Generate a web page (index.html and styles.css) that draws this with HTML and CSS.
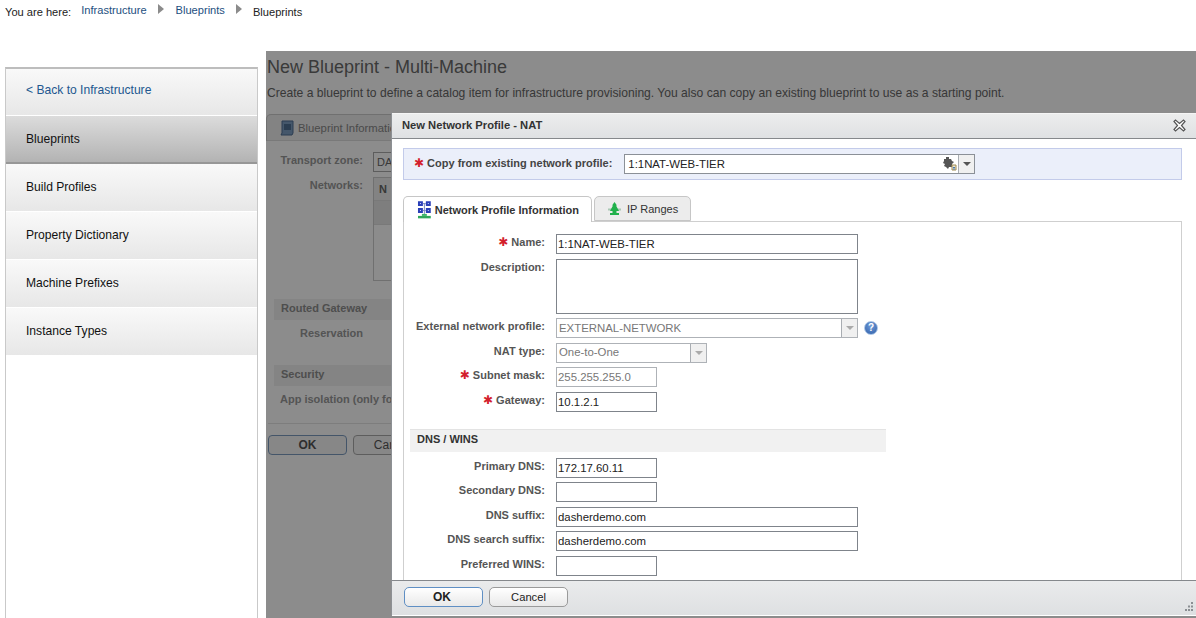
FILE: index.html
```html
<!DOCTYPE html>
<html lang="en">
<head>
  <meta charset="UTF-8">
  <title>New Blueprint - Multi-Machine</title>
  <link rel="stylesheet" href="styles.css">
</head>
<body>
  <div class="crumbs">
    <span class="crumb-label">You are here:</span>
    <a class="crumb-link">Infrastructure</a>
    <span class="crumb-arrow"></span>
    <a class="crumb-link">Blueprints</a>
    <span class="crumb-arrow"></span>
    <span class="crumb-current">Blueprints</span>
  </div>

  <div class="page">
    <nav class="sidebar">
      <a class="side-item side-back">&lt; Back to Infrastructure</a>
      <a class="side-item side-active">Blueprints</a>
      <a class="side-item">Build Profiles</a>
      <a class="side-item">Property Dictionary</a>
      <a class="side-item">Machine Prefixes</a>
      <a class="side-item">Instance Types</a>
    </nav>

    <main class="content">
      <h1 class="page-title">New Blueprint - Multi-Machine</h1>
      <p class="page-desc">Create a blueprint to define a catalog item for infrastructure provisioning. You also can copy an existing blueprint to use as a starting point.</p>

      <div class="back-tabs">
        <div class="back-tab">
          <svg class="back-tab-icon" width="16" height="16" viewBox="0 0 16 16"><path d="M3 1h11v12l-1 2H2l1-2z" fill="#7f9fc4" stroke="#4f6f94"/><path d="M5 4h7v6H5z" fill="#4f6f94"/></svg>
          Blueprint Information
        </div>
      </div>
      <div class="back-panel">
        <div class="back-row"><span class="back-label">Transport zone:</span><span class="back-input">DA</span></div>
        <div class="back-row back-row-tall">
          <span class="back-label">Networks:</span>
          <div class="back-table">
            <div class="back-table-head">N</div>
            <div class="back-table-row"></div>
          </div>
        </div>
        <div class="back-head">Routed Gateway</div>
        <div class="back-row back-row-res"><span class="back-label">Reservation</span></div>
        <div class="back-head">Security</div>
        <div class="back-isolation">App isolation (only for</div>
      </div>
      <div class="back-buttons">
        <span class="back-btn back-btn-ok">OK</span>
        <span class="back-btn">Cancel</span>
      </div>
    </main>
  </div>

  <div class="mask"></div>

  <section class="dialog">
    <header class="dialog-title">
      <span>New Network Profile - NAT</span>
      <svg class="dialog-close" width="13" height="13" viewBox="0 0 13 13"><path d="M1 2.500 2.500 1 6.500 4.500 10.500 1 12 2.500 8.500 6.500 12 10.500 10.500 12 6.500 8.500 2.500 12 1 10.500 4.500 6.500z" fill="#fff" stroke="#555" stroke-width="1.200"/></svg>
    </header>

    <div class="dialog-body">
      <div class="copy-bar">
        <span class="copy-label"><i class="req">✱</i> Copy from existing network profile:</span>
        <div class="combo copy-combo">
          <span class="combo-text">1:1NAT-WEB-TIER</span>
          <svg class="combo-puzzle" width="16" height="16" viewBox="0 0 16 16"><path d="M2 3h2V1h3v2h2l1 2 2 1-2 2v3H7l-1 2-2-2-2-1 1-2-2-1 1-2z" fill="#555"/><path d="M10 9h4v5h-4z" fill="#e8e4d0" stroke="#a08a50"/><path d="M11 11.500h2M11 13h2" stroke="#4a7ab0"/></svg>
          <span class="combo-btn"><span class="caret"></span></span>
        </div>
      </div>

      <div class="tabs">
        <div class="tab tab-active">
          <svg width="15" height="19" viewBox="0 0 15 19"><path d="M1 1h5v5H1zM9 1h5v5H9zM1 8h5v5H1zM9 8h5v5H9z" fill="#2a3fb8"/><path d="M3 3h1v1H3zM11 3h1v1h-1zM3 10h1v1H3zM11 10h1v1h-1z" fill="#cfd6ff"/><path d="M6 3.500h3M6 10.500h3M7.500 3v11" stroke="#7a8ac0"/><path d="M5 14h5v2H5z" fill="#3cb56a"/><path d="M1 16h13v2.500H1z" fill="#2fa85c"/></svg>
          Network Profile Information
        </div>
        <div class="tab">
          <svg width="15" height="14" viewBox="0 0 15 14"><path d="M1 7.500h13" stroke="#a9c9b4" stroke-width="2"/><path d="M7.500 0 10 3.500H9L12 9H9.500v2H12v2H3v-2h2.500V9H3l3-5.500H5z" fill="#22b14c"/></svg>
          IP Ranges
        </div>
      </div>

      <div class="tab-panel">
        <div class="form">
          <label class="form-label"><i class="req">✱</i> Name:</label>
          <div class="field field-long">1:1NAT-WEB-TIER</div>

          <label class="form-label">Description:</label>
          <div class="field field-long field-area"></div>

          <label class="form-label">External network profile:</label>
          <div class="field-line">
            <div class="combo combo-off field-long"><span class="combo-text">EXTERNAL-NETWORK</span><span class="combo-btn"><span class="caret"></span></span></div>
            <span class="help">?</span>
          </div>

          <label class="form-label">NAT type:</label>
          <div class="combo combo-off field-mid"><span class="combo-text">One-to-One</span><span class="combo-btn"><span class="caret"></span></span></div>

          <label class="form-label"><i class="req">✱</i> Subnet mask:</label>
          <div class="field field-short field-off">255.255.255.0</div>

          <label class="form-label"><i class="req">✱</i> Gateway:</label>
          <div class="field field-short">10.1.2.1</div>
        </div>

        <div class="section-head">DNS / WINS</div>

        <div class="form">
          <label class="form-label">Primary DNS:</label>
          <div class="field field-short">172.17.60.11</div>

          <label class="form-label">Secondary DNS:</label>
          <div class="field field-short"></div>

          <label class="form-label">DNS suffix:</label>
          <div class="field field-long">dasherdemo.com</div>

          <label class="form-label">DNS search suffix:</label>
          <div class="field field-long">dasherdemo.com</div>

          <label class="form-label">Preferred WINS:</label>
          <div class="field field-short"></div>
        </div>
      </div>
    </div>

    <footer class="dialog-foot">
      <button class="btn btn-ok">OK</button>
      <button class="btn">Cancel</button>
      <svg class="grip" width="10" height="10" viewBox="0 0 10 10"><path d="M7 0h2v2H7zM4 3.500h2v2H4zM7 3.500h2v2H7zM1 7h2v2H1zM4 7h2v2H4zM7 7h2v2H7z" fill="#8b8f93"/></svg>
    </footer>
  </section>
</body>
</html>
```

FILE: styles.css
```css
* {
  box-sizing: border-box;
}

html, body {
  height: 618px;
  overflow: hidden;
}

body {
  margin: 0;
  font-family: "Liberation Sans", Arial, sans-serif;
  font-size: 11px;
  color: #222;
  background: #fff;
  position: relative;
}

/* breadcrumb */
.crumbs {
  height: 51px;
  padding: 2px 0 0 5px;
  display: flex;
  align-items: flex-start;
  font-size: 11.100px;
  line-height: 16px;
}

.crumb-label {
  margin-top: 2px;
  margin-right: 10px;
}

.crumb-link {
  color: #1d4f80;
}

.crumb-arrow {
  width: 0;
  height: 0;
  margin: 2px 12px 0 11px;
  border-left: 6px solid #8b8b8b;
  border-top: 5px solid transparent;
  border-bottom: 5px solid transparent;
}

.crumb-current {
  margin: 2px 0 0 -1px;
}

/* page */
.page {
  display: flex;
  height: 567px;
}

.sidebar {
  width: 253px;
  margin: 16px 8px 0 5px;
  border: 1px solid #c9c9c9;
  border-top: 2px solid #bdbdbd;
  border-bottom: 0;
  display: flex;
  flex-direction: column;
}

.side-item {
  height: 48px;
  padding: 0 0 2px 20px;
  display: flex;
  align-items: center;
  font-size: 12.100px;
  color: #111;
  background: linear-gradient(#f9f9f9, #e7e7e7);
  border-bottom: 1px solid #fff;
}

.side-back {
  color: #22578f;
  height: 47px;
  padding-bottom: 4px;
}

.side-active {
  padding-bottom: 0;
  background: linear-gradient(#dcdcdc, #b3b3b3);
  border-bottom: 2px solid #979797;
}

.content {
  flex: 1;
  min-width: 0;
  padding-top: 4px;
  color: #9a9a9a;
}

.page-title {
  margin: 0;
  padding-left: 1px;
  font-size: 18px;
  font-weight: normal;
  line-height: 24px;
  color: #6a6a6a;
}

.page-desc {
  margin: 6px 0 0;
  padding-left: 1px;
  font-size: 12.100px;
  line-height: 16px;
  color: #666;
}

.back-tabs {
  display: flex;
  margin: 13px 0 0;
}

.back-tab {
  width: 222px;
  height: 27px;
  padding-left: 12px;
  display: flex;
  align-items: center;
  gap: 3px;
  font-size: 11.300px;
  color: #888;
  background: #eee;
  border: 1px solid #ccc;
  border-bottom-color: #ddd;
  border-radius: 5px 5px 0 0;
}

.back-panel {
  margin-left: 2px;
  padding-top: 11px;
}

.back-row {
  display: flex;
  align-items: flex-start;
  height: 25px;
}

.back-row-tall {
  height: 122px;
}

.back-row-res {
  height: 43px;
  padding-top: 3px;
}

.back-label {
  width: 95px;
  padding-top: 2px;
  text-align: right;
  font-weight: bold;
  color: #999;
  white-space: nowrap;
}

.back-input {
  margin-left: 10px;
  width: 60px;
  height: 20px;
  padding: 3px;
  color: #666;
  border: 1px solid #aaa;
}

.back-table {
  margin-left: 10px;
  width: 60px;
  height: 104px;
  border: 1px solid #ccc;
  font-weight: bold;
  color: #666;
}

.back-table-head {
  height: 23px;
  padding: 5px;
  background: #eee;
  border-bottom: 1px solid #ddd;
}

.back-table-row {
  height: 24px;
  background: #e6e6e6;
  border-bottom: 1px solid #ddd;
}

.back-head {
  height: 21px;
  margin-left: 6px;
  padding: 3px 0 0 7px;
  font-weight: bold;
  color: #8e8e8e;
  background: #f1f1f1;
  margin-bottom: 2px;
}

.back-isolation {
  margin: 7px 0 0 12px;
  font-weight: bold;
  color: #999;
  white-space: nowrap;
}

.back-buttons {
  margin: 18px 0 0 2px;
  padding-top: 11px;
  border-top: 1px solid #e4e4e4;
  display: flex;
  gap: 6px;
}

.back-btn {
  width: 79px;
  height: 20px;
  text-align: center;
  font-size: 12px;
  line-height: 18px;
  color: #555;
  border: 1px solid #aaa;
  border-radius: 4px;
  background: #f6f6f6;
}

.back-btn-ok {
  font-weight: bold;
  border-color: #7d9cc0;
}

.mask {
  position: absolute;
  left: 266px;
  top: 51px;
  right: 0;
  bottom: 0;
  background: rgba(0, 0, 0, 0.45);
}

/* dialog */
.dialog {
  position: absolute;
  left: 391px;
  top: 113px;
  width: 805px;
  height: 503px;
  display: flex;
  flex-direction: column;
  background: #fff;
  border-left: 1px solid #8d9094;
}

.dialog-title {
  height: 26px;
  padding: 0 10px 2px 10px;
  display: flex;
  align-items: center;
  justify-content: space-between;
  font-weight: bold;
  font-size: 11.200px;
  color: #333;
  background: linear-gradient(#eceded, #dfe1e3);
  border-top: 1px solid #f5f5f5;
  border-bottom: 1px solid #85888c;
}

.dialog-body {
  flex: 1;
  min-height: 0;
  overflow: hidden;
  padding: 9px 14px 0 11px;
}

.req {
  font-family: "DejaVu Sans", sans-serif;
  font-style: normal;
  font-weight: normal;
  font-size: 12px;
  line-height: 12px;
  color: #d3202c;
}

.copy-bar {
  height: 32px;
  padding-left: 10px;
  display: flex;
  align-items: center;
  gap: 12px;
  background: #ebeffa;
  border: 1px solid #c3cbea;
}

.copy-label {
  padding-bottom: 2px;
  font-weight: bold;
  color: #444;
}

.combo {
  display: flex;
  align-items: center;
  height: 20px;
  font-size: 11.400px;
  background: #fff;
  border: 1px solid #8b9097;
  position: relative;
}

.copy-combo {
  width: 351px;
  height: 20px;
  margin-top: -1px;
}

.combo-text {
  flex: 1;
  padding-left: 3px;
  white-space: nowrap;
}

.combo-puzzle {
  position: absolute;
  right: 16px;
  top: 1px;
}

.combo-btn {
  width: 16px;
  height: 100%;
  display: flex;
  align-items: center;
  justify-content: center;
  background: #f0f0f0;
  border-left: 1px solid #a9adb2;
}

.caret {
  width: 0;
  height: 0;
  border-left: 4px solid transparent;
  border-right: 4px solid transparent;
  border-top: 4px solid #555;
}

.tabs {
  display: flex;
  gap: 2px;
  margin-top: 16px;
  height: 26px;
  position: relative;
  z-index: 1;
}

.tab {
  height: 25px;
  padding: 0 12px;
  display: flex;
  align-items: center;
  gap: 5px;
  color: #333;
  background: #ececec;
  border: 1px solid #c6c6c6;
  border-radius: 5px 5px 0 0;
  white-space: nowrap;
}

.tab-active {
  width: 189px;
  height: 26px;
  padding-left: 13px;
  gap: 3px;
  font-weight: bold;
  background: #fff;
  border-bottom: 0;
}

.tab-panel {
  margin-top: -1px;
  height: 400px;
  padding: 12px 0 0 6px;
  border: 1px solid #cfcfcf;
  border-bottom: 0;
}

.form {
  display: grid;
  grid-template-columns: 135px 1fr;
  column-gap: 11px;
  row-gap: 4.500px;
  align-items: start;
}

.form-label {
  min-height: 20px;
  padding-top: 2px;
  text-align: right;
  font-weight: bold;
  color: #555;
  white-space: nowrap;
}

.field {
  height: 20px;
  padding: 2px 1px 0;
  font-size: 11.400px;
  line-height: 14px;
  border: 1px solid #7f848b;
  background: #fff;
  white-space: nowrap;
}

.field-long {
  width: 302px;
}

.field-area {
  height: 55px;
}

.field-mid {
  width: 151px;
}

.field-short {
  width: 101px;
}

.field-off {
  color: #777;
  border-color: #aeb2b7;
}

.field-line {
  display: flex;
  align-items: center;
  gap: 6px;
}

.combo-off {
  color: #777;
  border-color: #aeb2b7;
}

.combo-off .combo-text {
  padding: 0 0 1px 2px;
}

.combo-off .caret {
  border-top-color: #aaa;
}

.help {
  width: 12px;
  height: 12px;
  border-radius: 50%;
  text-align: center;
  font-size: 10px;
  font-weight: bold;
  line-height: 12px;
  color: #fff;
  background: radial-gradient(circle at 50% 35%, #6f9bd8, #2f5ea8);
  border: 1px solid #a9c4e6;
  box-sizing: content-box;
}

.section-head {
  width: 476px;
  height: 23px;
  margin: 17px 0 6px;
  padding: 3px 0 0 7px;
  font-weight: bold;
  color: #333;
  background: #f1f1f1;
  border-top: 1px solid #e3e3e3;
}

.dialog-foot {
  height: 36px;
  padding: 0 12px 2px;
  display: flex;
  align-items: center;
  gap: 6px;
  position: relative;
  background: linear-gradient(#eaebec, #dee0e2);
  border-top: 1px solid #85888c;
  border-bottom: 1px solid #fff;
}

.btn {
  width: 79px;
  height: 20px;
  padding: 0;
  font-family: inherit;
  font-size: 11.200px;
  color: #222;
  background: linear-gradient(#fff, #e9e9e9);
  border: 1px solid #9a9a9a;
  border-radius: 5px;
}

.btn-ok {
  padding: 0 3px 1px 0;
  font-size: 12px;
  font-weight: bold;
  border-color: #5f8fc4;
}

.grip {
  position: absolute;
  right: 2px;
  bottom: 3px;
}
```
